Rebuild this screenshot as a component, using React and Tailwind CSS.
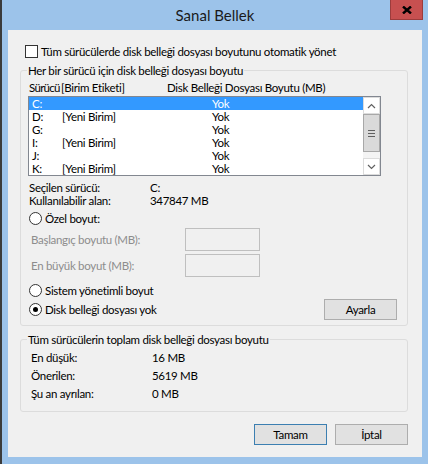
import React from "react";

const drives = [
  { letter: "C:", label: "", size: "Yok" },
  { letter: "D:", label: "[Yeni Birim]", size: "Yok" },
  { letter: "G:", label: "", size: "Yok" },
  { letter: "I:", label: "[Yeni Birim]", size: "Yok" },
  { letter: "J:", label: "", size: "Yok" },
  { letter: "K:", label: "[Yeni Birim]", size: "Yok" },
];

const totals = [
  ["En düşük:", "16 MB"],
  ["Önerilen:", "5619 MB"],
  ["Şu an ayrılan:", "0 MB"],
];

// radyo düğmesi
const Radio = ({ checked, label }) => (
  <div className="flex items-center h-[13px] ml-[1px]">
    <span className="flex items-center justify-center w-[13px] h-[13px] rounded-full border border-[#333333] bg-white">
      {checked && <span className="w-[5px] h-[5px] rounded-full bg-black" />}
    </span>
    <span className="ml-[3px] leading-[13px]">{label}</span>
  </div>
);

const Chevron = ({ up }) => (
  <svg width="9" height="6" viewBox="0 0 9 6">
    <path d={up ? "M1 5 L4.5 1.5 L8 5" : "M1 1 L4.5 4.5 L8 1"} fill="none" stroke="#606060" strokeWidth="1.2" />
  </svg>
);

export default function App() {
  return (
    <div className="flex w-[428px] h-[464px] bg-[#9cc3ea] font-['Lato','Liberation_Sans',sans-serif] text-[11.5px] tracking-[-0.3px] text-black select-none">
      <div className="w-[2px] h-full bg-[#3b3b3b]" />
      <div className="flex flex-col flex-1">
        {/* başlık çubuğu */}
        <div className="grid grid-cols-[1fr_auto_1fr] h-[30px]">
          <div />
          <div className="text-[15px] tracking-normal leading-[30px] text-[#1a1a1a]">Sanal Bellek</div>
          <div className="flex justify-end items-start pr-[5px]">
            <div className="flex items-center justify-center w-[33px] h-[20px] bg-[#c75050] border border-[#9c3c3c] border-t-0">
              <svg width="10" height="8" viewBox="0 0 10 8">
                <path d="M1 0.5 L9 7.5 M9 0.5 L1 7.5" stroke="#000" strokeWidth="2.4" />
              </svg>
            </div>
          </div>
        </div>

        {/* pencere içi */}
        <div className="ml-[6px] w-[414px] h-[427px] bg-[#f0f0f0] flex flex-col pl-[12px] pr-[14px]">
          <div className="flex items-center h-[13px] mt-[15px] ml-[5px]">
            <span className="w-[13px] h-[13px] border border-[#333333] bg-white" />
            <span className="ml-[3px] leading-[13px]">Tüm sürücülerde disk belleği dosyası boyutunu otomatik yönet</span>
          </div>

          <fieldset className="mt-[5px] border border-[#dcdcdc] rounded-[3px] px-[7px] pb-[5px]">
            <legend className="-ml-[1px] px-[1px] leading-[15px]">Her bir sürücü için disk belleği dosyası boyutu</legend>
            <div className="flex mt-[2px] h-[15px] leading-[15px] pl-[1px]">
              <span className="w-[32px] tracking-[-0.7px]">Sürücü</span>
              <span className="w-[106px]">[Birim Etiketi]</span>
              <span>Disk Belleği Dosyası Boyutu (MB)</span>
            </div>

            <div className="flex mt-[1px] w-[353px] h-[80px] border border-[#828790] bg-white">
              <div className="w-[334px]">
                {drives.map((d, i) => (
                  <div
                    key={d.letter}
                    className={`flex h-[13px] leading-[13px] pl-[3px] ${i === 0 ? "bg-[#3399ff] text-white" : ""}`}
                  >
                    <span className="w-[30px]">{d.letter}</span>
                    <span className="w-[150px]">{d.label}</span>
                    <span>{d.size}</span>
                  </div>
                ))}
              </div>
              <div className="w-[17px] flex flex-col bg-[#f4f4f4]">
                <div className="h-[17px] flex items-center justify-center border border-[#dcdcdc] bg-white">
                  <Chevron up />
                </div>
                <div className="h-[38px] flex flex-col items-center justify-center gap-[2px] bg-[#dadada] border border-[#a8a8a8]">
                  <span className="w-[7px] h-[1px] bg-[#606060]" />
                  <span className="w-[7px] h-[1px] bg-[#606060]" />
                  <span className="w-[7px] h-[1px] bg-[#606060]" />
                </div>
                <div className="h-[6px]" />
                <div className="h-[17px] flex items-center justify-center border border-[#dcdcdc] bg-white">
                  <Chevron />
                </div>
              </div>
            </div>

            <div className="mt-[5px] pl-[1px]">
              <div className="flex h-[13px] leading-[13px]">
                <span className="w-[121px]">Seçilen sürücü:</span>
                <span>C:</span>
              </div>
              <div className="flex h-[13px] leading-[13px]">
                <span className="w-[121px]">Kullanılabilir alan:</span>
                <span>347847 MB</span>
              </div>
            </div>

            <div className="mt-[5px]">
              <Radio label="Özel boyut:" />
            </div>
            <div className="flex items-center mt-[3px] h-[23px] text-[#8d8d8d]">
              <span className="w-[157px] pl-[3px]">Başlangıç boyutu (MB):</span>
              <span className="w-[75px] h-[23px] border border-[#bfbfbf]" />
            </div>
            <div className="flex items-center mt-[3px] h-[23px] text-[#8d8d8d]">
              <span className="w-[157px] pl-[3px]">En büyük boyut (MB):</span>
              <span className="w-[75px] h-[23px] border border-[#bfbfbf]" />
            </div>

            <div className="flex justify-between mt-[7px] h-[36px]">
              <div className="flex flex-col gap-[6px]">
                <Radio label="Sistem yönetimli boyut" />
                <Radio checked label="Disk belleği dosyası yok" />
              </div>
              <button className="self-end w-[73px] h-[21px] mr-[3px] bg-[#e1e1e1] border border-[#adadad] leading-[19px]">
                Ayarla
              </button>
            </div>
          </fieldset>

          <fieldset className="mt-[6px] border border-[#dcdcdc] rounded-[3px] px-[7px] pb-[8px]">
            <legend className="-ml-[1px] px-[1px] leading-[15px]">Tüm sürücülerin toplam disk belleği dosyası boyutu</legend>
            <div className="mt-[2px]">
              {totals.map(([k, v]) => (
                <div key={k} className="flex h-[18px] leading-[18px] pl-[3px]">
                  <span className="w-[121px]">{k}</span>
                  <span>{v}</span>
                </div>
              ))}
            </div>
          </fieldset>

          <div className="flex justify-end gap-[8px] mt-[12px]">
            <button className="w-[73px] h-[21px] bg-[#e1e1e1] border border-[#3c7fb1] leading-[19px]">Tamam</button>
            <button className="w-[73px] h-[21px] bg-[#e1e1e1] border border-[#adadad] leading-[19px]">İptal</button>
          </div>
        </div>
      </div>
    </div>
  );
}
